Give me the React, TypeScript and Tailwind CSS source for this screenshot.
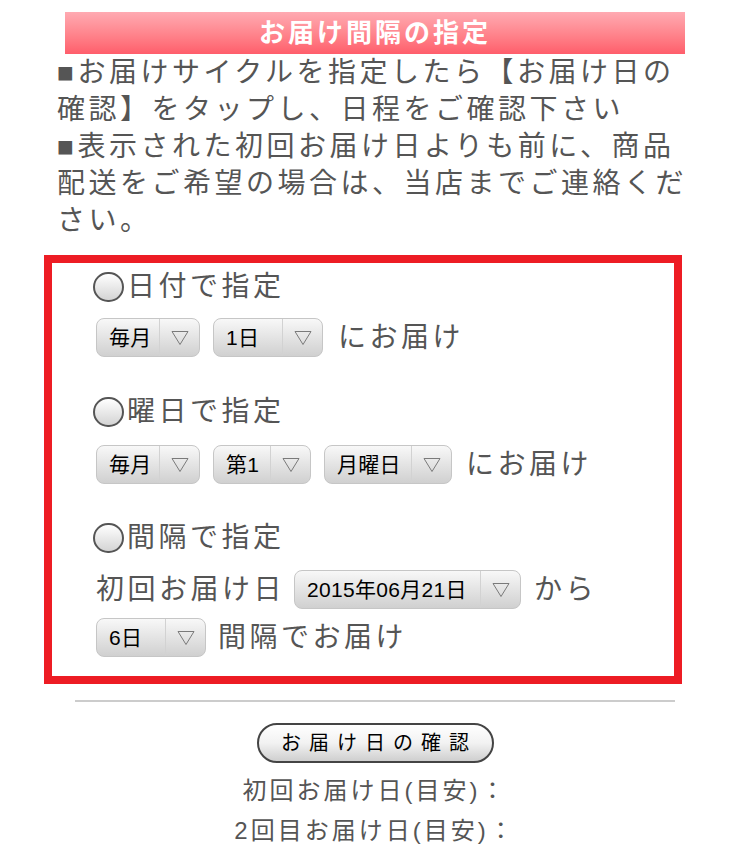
import React from "react"

const jp = "font-['Liberation_Sans','Noto_Sans_CJK_JP',sans-serif]"

function Radio() {
  return (
    <span className="inline-block w-[31px] h-[30px] rounded-full border-2 border-[#555] bg-gradient-to-b from-white to-[#d4d4d4] mr-[3px] shrink-0" />
  )
}

function Arrow() {
  return (
    <svg width="18" height="16" viewBox="0 0 18 16" fill="none">
      <path d="M1 1.5 H17 L9 14.5 Z" stroke="#7a7a7a" strokeWidth="1" strokeLinejoin="miter" />
    </svg>
  )
}

function Select({ label, width }: { label: string; width: string }) {
  return (
    <div
      className={`${width} h-[39px] flex rounded-[8px] border border-[#c6c6c6] bg-gradient-to-b from-[#f8f8f8] to-[#d0d0d0] shrink-0`}
    >
      <div className="flex-1 flex items-center pl-[12px] text-[21px] leading-[39px] tracking-[0.3px] text-black whitespace-nowrap">
        {label}
      </div>
      <div className="w-[40px] flex items-center justify-center border-l border-[#d2d2d2]">
        <Arrow />
      </div>
    </div>
  )
}

export default function App() {
  return (
    <div className={`w-[750px] bg-white ${jp} text-[#555]`}>
      <div className="pt-[12px] px-[57px]">
        <div className="mx-[8px] h-[42px] flex items-center justify-center bg-gradient-to-b from-[#ffaab2] to-[#ff5d6b]">
          <span className="text-white font-bold text-[26px] tracking-[3px]">お届け間隔の指定</span>
        </div>
        <p className="text-[28px] leading-[37px] tracking-[3.5px] whitespace-nowrap">
          ■お届けサイクルを指定したら【お届け日の
          <br />
          確認】をタップし、日程をご確認下さい
          <br />
          ■表示された初回お届け日よりも前に、商品
          <br />
          配送をご希望の場合は、当店までご連絡くだ
          <br />
          さい。
        </p>
      </div>

      <div className="ml-[44px] mt-[16px] w-[638px] border-[8px] border-[#ed1c24] pl-[44px] pt-[6px] pb-[19px] text-[28px] leading-[36px] tracking-[3.5px]">
        <div className="h-[36px] flex items-center -ml-[3px]">
          <Radio />
          <span>日付で指定</span>
        </div>
        <div className="mt-[13px] h-[39px] flex items-center">
          <Select label="毎月" width="w-[104px]" />
          <div className="ml-[13px]">
            <Select label="1日" width="w-[110px]" />
          </div>
          <span className="ml-[15px]">にお届け</span>
        </div>

        <div className="mt-[37px] h-[36px] flex items-center -ml-[3px]">
          <Radio />
          <span>曜日で指定</span>
        </div>
        <div className="mt-[15px] h-[39px] flex items-center gap-[13px]">
          <Select label="毎月" width="w-[104px]" />
          <Select label="第1" width="w-[98px]" />
          <Select label="月曜日" width="w-[128px]" />
          <span className="ml-[1px]">にお届け</span>
        </div>

        <div className="mt-[36px] h-[36px] flex items-center -ml-[3px]">
          <Radio />
          <span>間隔で指定</span>
        </div>
        <div className="mt-[14px] h-[39px] flex items-center">
          <span>初回お届け日</span>
          <div className="ml-[9px]">
            <Select label="2015年06月21日" width="w-[227px]" />
          </div>
          <span className="ml-[13px]">から</span>
        </div>
        <div className="mt-[9px] h-[39px] flex items-center">
          <Select label="6日" width="w-[110px]" />
          <span className="ml-[12px]">間隔でお届け</span>
        </div>
      </div>

      <div className="ml-[75px] mt-[16px] w-[600px] h-[2px] bg-[#cccccc]" />

      <div className="flex flex-col items-center pt-[21px] pb-[20px]">
        <button className="w-[237px] h-[40px] rounded-full border-2 border-[#444] bg-gradient-to-b from-white via-[#f2f2f2] to-[#cfcfcf] text-black text-[20px] tracking-[8px] pl-[8px] flex items-center justify-center">
          お届け日の確認
        </button>
        <div className="mt-[8px] text-[24px] leading-[40px] tracking-[3px] text-center">
          <div>初回お届け日(目安)：</div>
          <div>2回目お届け日(目安)：</div>
        </div>
      </div>
    </div>
  )
}
